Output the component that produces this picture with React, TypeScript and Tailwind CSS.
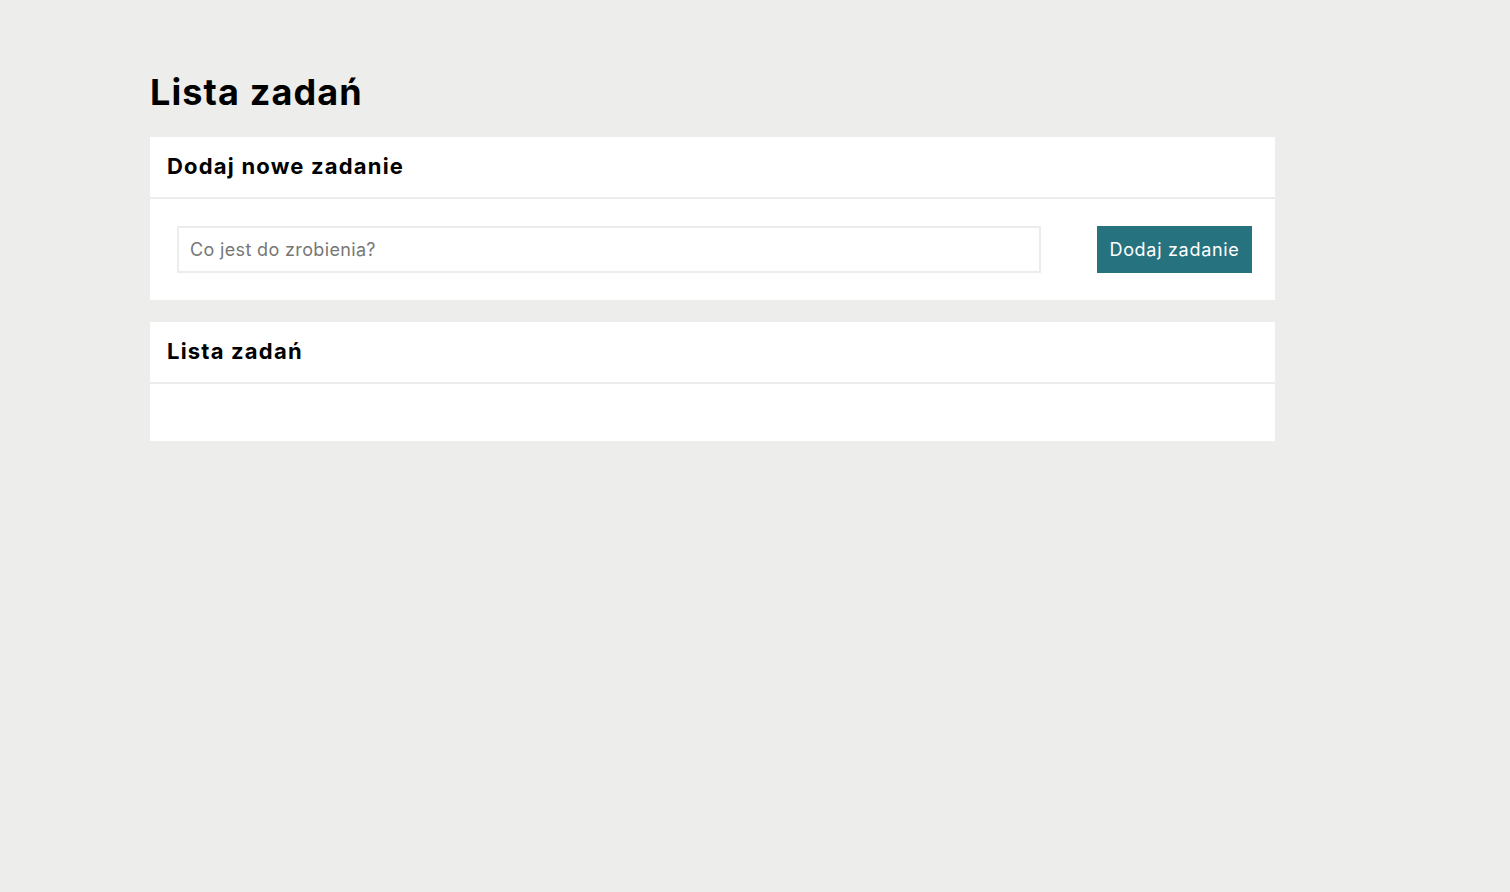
import React, { useState } from 'react';

const App = () => {
  const [task, setTask] = useState('');

  return (
    <div className="min-h-screen bg-[#ededeb] font-['Inter',sans-serif] text-black">
      <div className="ml-[150px] w-[1125px] pt-[70px]">
        <h1 className="text-[36px] font-bold leading-[44px] tracking-[1.1px] mb-[23px]">Lista zadań</h1>

        <div className="bg-white mb-[22px]">
          <div className="h-[62px] flex items-center px-[17px] pb-[2px] border-b-2 border-[#ececec]">
            <h2 className="text-[22px] font-bold tracking-[1.2px]">Dodaj nowe zadanie</h2>
          </div>
          <div className="flex items-center justify-between pl-[27px] pr-[23px] pt-[27px] pb-[27px]">
            <input
              type="text"
              value={task}
              onChange={(e) => setTask(e.target.value)}
              placeholder="Co jest do zrobienia?"
              className="w-[864px] h-[47px] border-2 border-[#ececec] px-[11px] text-[18px] tracking-[0.35px] text-[#555] placeholder:text-[#777] outline-none"
            />
            <button className="h-[47px] w-[155px] bg-[#26737f] text-white text-[18px] tracking-[0.7px]">
              Dodaj zadanie
            </button>
          </div>
        </div>

        <div className="bg-white">
          <div className="h-[62px] flex items-center px-[17px] pb-[2px] border-b-2 border-[#ececec]">
            <h2 className="text-[22px] font-bold tracking-[1.2px]">Lista zadań</h2>
          </div>
          <div className="h-[57px]"></div>
        </div>
      </div>
    </div>
  );
};

export default App;
